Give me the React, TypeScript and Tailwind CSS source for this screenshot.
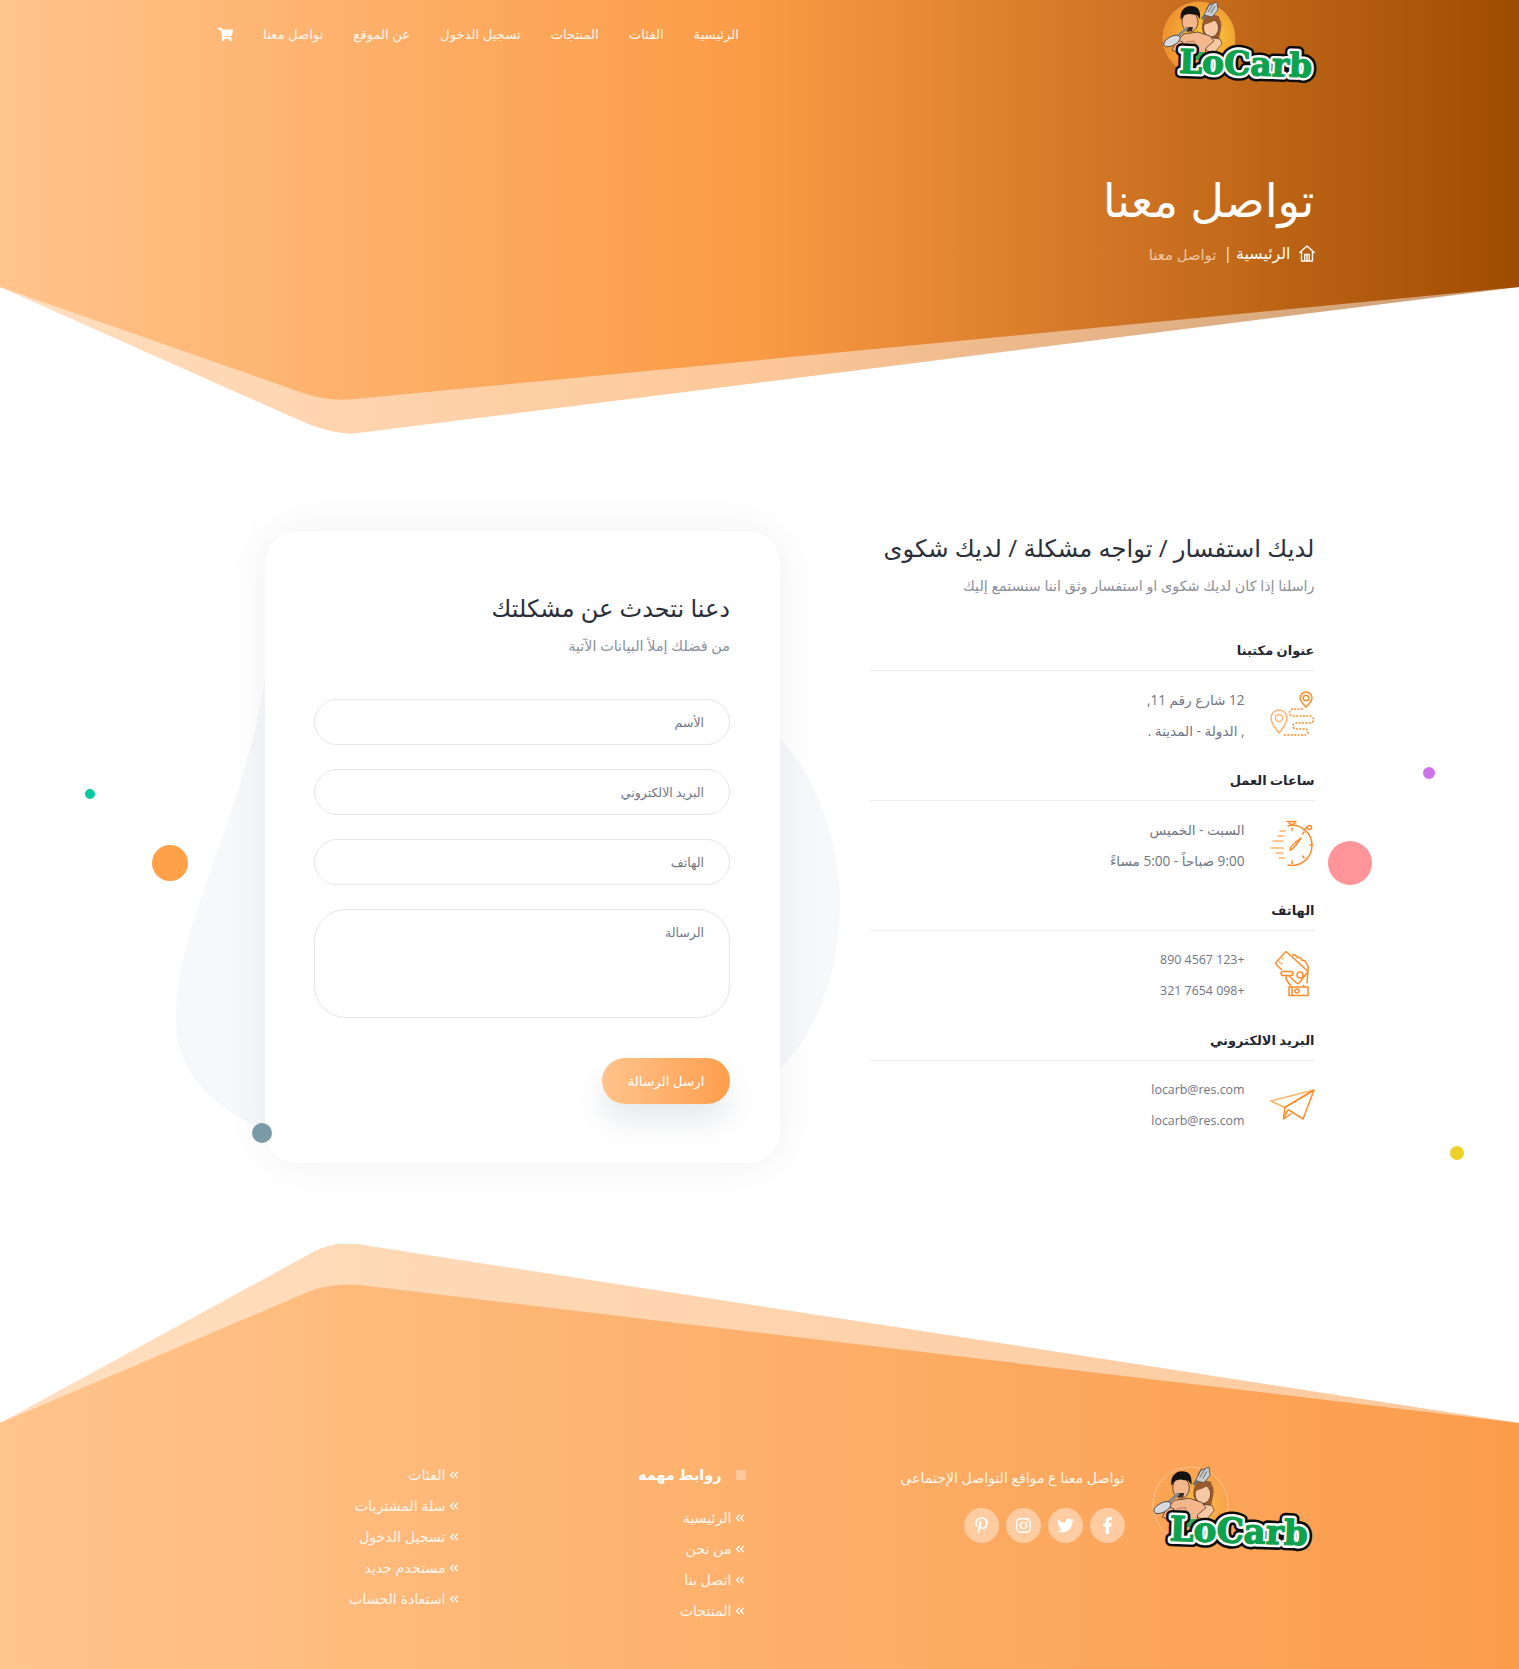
import { ChevronsLeft } from 'lucide-react';
import { FaShoppingCart, FaFacebookF, FaTwitter, FaInstagram, FaPinterestP } from 'react-icons/fa';

const navLinks = ['الرئيسية', 'الفئات', 'المنتجات', 'تسجيل الدخول', 'عن الموقع', 'تواصل معنا'];
const importantLinks = ['الرئيسية', 'من نحن', 'اتصل بنا', 'المنتجات'];
const otherLinks = ['الفئات', 'سلة المشتريات', 'تسجيل الدخول', 'مستخدم جديد', 'استعادة الحساب'];

function Logo({ flat = false }: { flat?: boolean }) {
  return (
    <svg width={flat ? 166 : 160} height={flat ? 93.500 : 90} viewBox="14 0 160 90" className="block" direction="ltr">
      <defs>
        <radialGradient id={flat ? 'sunFlat' : 'sun'} cx="0.6" cy="0.5" r="0.6">
          <stop offset="0" stopColor="#f9d13c" stopOpacity={flat ? 0.75 : 1} />
          <stop offset="1" stopColor="#ef8f2e" stopOpacity={flat ? 0 : 1} />
        </radialGradient>
      </defs>
      <circle cx="51" cy="38" r="36" fill={`url(#${flat ? 'sunFlat' : 'sun'})`} stroke={flat ? '#ffffff' : '#f3b46a'} strokeWidth="0.5" strokeDasharray={flat ? '2 1' : undefined} />
      {/* woman */}
      <path d="M54 30c-1-10 4-15 10-15s11 5 9 14l-2 10H58z" fill="#9a5a2c" />
      <ellipse cx="63" cy="28" rx="7.5" ry="9" fill="#f6c9a4" stroke="#3b2415" strokeWidth="0.6" />
      <path d="M56 25c3-1 9-3 13-6l3 6-1-9-10-2-5 5z" fill="#9a5a2c" />
      <path d="M58 37l14 2 2 5-8 9-9-3z" fill="#f6c9a4" stroke="#3b2415" strokeWidth="0.6" />
      {/* fork */}
      <path d="M54 19l8-9" stroke="#6b6f72" strokeWidth="3" />
      <path d="M56 15l5-10 8-3 1 8-6 7z" fill="#c9cdd0" stroke="#3d3f42" strokeWidth="0.7" />
      <path d="M60 12l5-8M63 13l4-7M58 10l4-7" stroke="#3d3f42" strokeWidth="0.7" />
      {/* man */}
      <path d="M28 42l8-8 14-2 12 4 4 5-8 7-1 8H33z" fill="#f4b78d" stroke="#3b2415" strokeWidth="0.7" />
      <path d="M24 50l5-10 6 2-2 12z" fill="#f4b78d" stroke="#3b2415" strokeWidth="0.7" />
      <path d="M46 41l3 8M38 42l8-1" stroke="#a8683f" strokeWidth="0.7" fill="none" />
      <ellipse cx="42" cy="22" rx="8" ry="10" fill="#f4b78d" stroke="#3b2415" strokeWidth="0.7" />
      <path d="M33 20c-2-8 3-14 10-14 6 0 10 3 9 13l-3-4-8-1-5 1z" fill="#141210" />
      <path d="M38 27h7l-1 4h-5z" fill="#3b2a20" />
      {/* spoon */}
      <path d="M30 36l9-8" stroke="#84888b" strokeWidth="3" strokeLinecap="round" />
      <ellipse cx="24" cy="41" rx="9" ry="4.500" transform="rotate(-28 24 41)" fill="#d6dadc" stroke="#3d3f42" strokeWidth="0.8" />
      <path d="M44 52h14l-3 8H47z" fill="#38a84f" />
      {/* wordmark */}
      <g fontFamily="'DejaVu Serif', serif" fontWeight="700" fontSize="33" transform="rotate(2 98 64)">
        <text x="31" y="75" fill="#0b0b0b" stroke="#0b0b0b" strokeWidth="11" strokeLinejoin="round">LoCarb</text>
        <text x="31" y="75" fill="#ffffff" stroke="#ffffff" strokeWidth="6" strokeLinejoin="round">LoCarb</text>
        <text x="31" y="75" fill="#0ea24e" stroke="#0ea24e" strokeWidth="1.200" strokeLinejoin="round">LoCarb</text>
      </g>
    </svg>
  );
}

function HomeIcon() {
  return (
    <svg width="16" height="17" viewBox="0 0 16 17" fill="none" stroke="#ffffff" strokeWidth="1.4" strokeLinejoin="round">
      <path d="M0.8 7.5 8 1l7.2 6.5" strokeLinecap="round" />
      <path d="M2.5 6.5V16h11V6.5" />
      <path d="M5.7 16V9.5h4.6V16" />
      <path d="M8 9.5V16" />
    </svg>
  );
}

function RouteIcon() {
  return (
    <svg width="45" height="48" viewBox="0 0 45 48" fill="none" strokeWidth="1.5">
      <path d="M36 17c-4-4-6-6-6-9a6 6 0 0 1 12 0c0 3-2 5-6 9z" stroke="#fb8c2a" />
      <circle cx="36" cy="8" r="2.8" stroke="#fb8c2a" />
      <path d="M9 43C4 37 1 33 1 28a8 8 0 0 1 16 0c0 5-3 9-8 15z" stroke="#ffb26b" />
      <circle cx="9" cy="28" r="3.6" stroke="#ffb26b" />
      <path d="M33 19H23a3.5 3.5 0 0 0 0 7h17a3.5 3.5 0 0 1 0 7H26a3 3 0 0 0 0 6h9a2.5 2.5 0 0 1 0 6H13" stroke="#fb8c2a" strokeDasharray="2 1.4" />
    </svg>
  );
}

function WatchIcon() {
  return (
    <svg width="45" height="48" viewBox="0 0 45 48" fill="none" stroke="#fb8c2a" strokeWidth="1.5" strokeLinecap="round">
      <path d="M18 5.8A20 20 0 1 1 18 45" />
      <path d="M17 1.5h9M19 1.5c0 2 1 3 3 3s3-1 3-3" />
      <path d="M34 10l3-3" />
      <circle cx="39.5" cy="7.5" r="2" />
      <path d="M20 29.5c0-2.5 6-8 11-11.5-3 5-8.500 11-10 12-1 .4-1-.2-1-.5z" />
      <path d="M40 25h2.500M22 8v2.500M22 41v2.500M34 12l-1.500 2M34 38l-1.500-2" />
      <path d="M10 11h5M8 16h6M3 21h10M1 28h12M6 33h7M9 38h5" stroke="#ffb26b" />
    </svg>
  );
}

function PhoneIcon() {
  return (
    <svg width="45" height="48" viewBox="0 0 45 48" fill="none" stroke="#fb8c2a" strokeWidth="1.5" strokeLinejoin="round">
      <path d="M15 2.500 6 12.500a1.500 1.500 0 0 0 .2 2L12 20" />
      <path d="M15 2.500a1.500 1.500 0 0 1 2-.3l20 18.300a1.500 1.500 0 0 1 .2 2L29 33a1.500 1.500 0 0 1-2 .2l-8-7.200" />
      <path d="M9 11.500l3.500 3M10.500 7l3 2.500" stroke="#ffb26b" />
      <path d="M22 5.500c1.500-1 3-1 4 .2l1.500 2c1.500-.7 3-.3 3.500 1l1 1.800c2-.5 3.500 .5 4 2l1 2c1.500 1.500 1.500 3 1 5l-1 14" />
      <rect x="11" y="21.500" width="12" height="4" rx="2" />
      <circle cx="30" cy="25" r="3" />
      <path d="M16 26v3l5 7.500M33 35l2 2" />
      <rect x="19" y="37" width="19" height="8.500" />
      <circle cx="27" cy="41" r="2" />
      <path d="M22 37v8.500" />
    </svg>
  );
}

function PlaneIcon() {
  return (
    <svg width="45" height="48" viewBox="0 0 45 48" fill="none" stroke="#fb8c2a" strokeWidth="1.5" strokeLinejoin="round">
      <path d="M44 10 0.8 21l14 6.500z" stroke="#ffb26b" />
      <path d="M44 10 14.800 27.500 13.500 39l8-5.500" />
      <path d="M44 10 33 39 18 29.500" />
      <path d="M13.500 39 18 29.500" />
    </svg>
  );
}

function InfoBlock({ title, lines, icon, latin = false }: { title: string; lines: string[]; icon: React.ReactNode; latin?: boolean }) {
  return (
    <div className="h-[130px]">
      <h4 className="h-[32px] border-b border-[#ececec] text-[13px] leading-[23px] font-bold text-[#23262f]">{title}</h4>
      <div className="flex items-start gap-[25px] pt-[11px]">
        <div className="shrink-0 mt-[8px]">{icon}</div>
        <div className="pt-[2px]">
          {lines.map((l) => (
            <p key={l} className={`leading-[31px] text-[#6f7583] ${latin ? 'text-[12.4px]' : 'text-[13.6px]'}`}>{l}</p>
          ))}
        </div>
      </div>
    </div>
  );
}

function Field({ placeholder }: { placeholder: string }) {
  return (
    <input
      placeholder={placeholder}
      className="block h-[46px] w-full rounded-full border border-[#e4e5e9] bg-white pr-[25px] pl-[24px] text-[12.5px] outline-none placeholder:text-[#6f7583]"
    />
  );
}

function LinkList({ links, gap }: { links: string[]; gap: string }) {
  return (
    <ul className={gap}>
      {links.map((l) => (
        <li key={l} className="flex h-[31px] items-center text-[14.2px] text-[#fff6ec]">
          <ChevronsLeft size={14} strokeWidth={2.2} className="-mr-[1px] ml-[1px] shrink-0 text-white" />
          <span>{l}</span>
        </li>
      ))}
    </ul>
  );
}

export default function App() {
  return (
    <div dir="rtl" className="relative w-full overflow-hidden bg-white font-['Open_Sans','DejaVu_Sans',sans-serif]">
      {/* Hero */}
      <header className="relative h-[440px]">
        <svg className="absolute inset-0" width="1519" height="440" viewBox="0 0 1519 440">
          <defs>
            <linearGradient id="hero" gradientUnits="userSpaceOnUse" x1="0" y1="0" x2="1519" y2="0">
              <stop offset="0" stopColor="#ffc48b" />
              <stop offset="0.5" stopColor="#fb9a45" />
              <stop offset="1" stopColor="#9f4b00" />
            </linearGradient>
          </defs>
          <path d="M0 287 300 420.6Q335 436 358 433L1519 287Z" fill="url(#hero)" opacity="0.55" />
          <path d="M0 0H1519V287L355 399Q330 402 303 393L0 287Z" fill="url(#hero)" />
        </svg>
        <div className="relative mx-auto w-[1110px]">
          <div className="flex items-start">
            <div className="-mr-[7.5px] shrink-0">
              <Logo />
            </div>
            <nav className="mr-[423px] flex items-center gap-[30px] pt-[23px]">
              {navLinks.map((l) => (
                <a key={l} className="text-[13.2px] leading-[22px] text-[#fff6ec]">{l}</a>
              ))}
              <FaShoppingCart size={15} className="text-white" />
            </nav>
          </div>
          <h1 className="mt-[79px] text-[46.4px] leading-[60px] font-normal text-white">تواصل معنا</h1>
          <div className="mt-[13px] flex items-center gap-[4px] text-[15.8px] text-white">
            <HomeIcon />
            <span className="mr-[4px]">الرئيسية</span>
            <span>|</span>
            <span className="mr-[3px] text-[14.8px] text-[#f2c6a2]">تواصل معنا</span>
          </div>
        </div>
      </header>

      {/* Contact */}
      <main className="relative pt-[91px] pb-[81px]">
        <svg className="absolute left-[170px] top-[200px]" width="680" height="540" viewBox="170 640 680 540">
          <path d="M265 680C240 830 172 930 176 1025C178 1075 215 1110 265 1130L780 1068C820 1030 840 965 840 905C840 840 815 775 780 739L500 640Z" fill="#f7f8fa" />
        </svg>
        <span className="absolute left-[85px] top-[349px] h-[10px] w-[10px] rounded-full bg-[#03c8a0]" />
        <span className="absolute left-[152px] top-[405px] h-[36px] w-[36px] rounded-full bg-[#ffa149]" />
        <span className="absolute left-[252px] top-[683px] z-10 h-[20px] w-[20px] rounded-full bg-[#7a9aa7]" />
        <span className="absolute left-[1423px] top-[327px] h-[12px] w-[12px] rounded-full bg-[#cf73ea]" />
        <span className="absolute left-[1328px] top-[401px] h-[44px] w-[44px] rounded-full bg-[#ff949b]" />
        <span className="absolute left-[1450px] top-[706px] h-[14px] w-[14px] rounded-full bg-[#ecd228]" />

        <div className="relative mx-auto flex w-[1110px] items-start">
          <section className="w-[445px] shrink-0">
            <h2 className="-mt-[1px] h-[36px] text-[24.2px] leading-[36px] font-normal text-[#2b2f3a]">لديك استفسار / تواجه مشكلة / لديك شكوى</h2>
            <p className="mt-[9px] text-[14.3px] leading-[22px] text-[#8a8f9c]">راسلنا إذا كان لديك شكوى او استفسار وثق اننا سنستمع إليك</p>
            <div className="mt-[42px]">
              <InfoBlock title="عنوان مكتبنا" icon={<RouteIcon />} lines={['12 شارع رقم 11,', ', الدولة - المدينة .']} />
              <InfoBlock title="ساعات العمل" icon={<WatchIcon />} lines={['السبت - الخميس', '9:00 صباحاً - 5:00 مساءً']} />
              <InfoBlock title="الهاتف" icon={<PhoneIcon />} latin lines={['+123 4567 890', '+098 7654 321']} />
              <InfoBlock title="البريد الالكتروني" icon={<PlaneIcon />} latin lines={['locarb@res.com', 'locarb@res.com ']} />
            </div>
          </section>

          <section className="relative mr-[89.5px] h-[632px] w-[515px] shrink-0 rounded-[32px] bg-white pr-[50px] pl-[49px] pt-[59px] shadow-[0_0_40px_rgba(60,70,100,0.08)]">
            <h3 className="text-[24px] leading-[36px] font-normal text-[#2b2f3a]">دعنا نتحدث عن مشكلتك</h3>
            <p className="mt-[9px] text-[14.4px] leading-[22px] text-[#8a8f9c]">من فضلك إملأ البيانات الآتية</p>
            <form className="mt-[42px] flex flex-col gap-[24px]">
              <Field placeholder="الأسم" />
              <Field placeholder="البريد الالكتروني" />
              <Field placeholder="الهاتف" />
              <textarea
                placeholder="الرسالة"
                className="block h-[109px] w-full resize-none rounded-[32px] border border-[#e4e5e9] bg-white pr-[25px] pl-[24px] py-[14px] text-[12.5px] outline-none placeholder:text-[#6f7583]"
              />
              <div className="mt-[16px] flex">
                <button type="button" className="h-[46px] w-[128px] rounded-full bg-gradient-to-l from-[#fd9e4b] to-[#ffc38b] text-[13.4px] text-white shadow-[0_18px_30px_rgba(60,70,100,0.12)]">
                  ارسل الرسالة
                </button>
              </div>
            </form>
          </section>
        </div>
      </main>

      {/* Footer */}
      <footer className="relative h-[425px]">
        <svg className="absolute inset-0" width="1519" height="425" viewBox="0 0 1519 425">
          <defs>
            <linearGradient id="foot" gradientUnits="userSpaceOnUse" x1="0" y1="0" x2="1519" y2="0">
              <stop offset="0" stopColor="#ffc48b" />
              <stop offset="1" stopColor="#fb9c4b" />
            </linearGradient>
          </defs>
          <path d="M0 179 306 12Q335 -6 365 1.300L1519 179Z" fill="url(#foot)" opacity="0.55" />
          <path d="M0 179 308 48Q333 38 362 41.300L1519 179V425H0Z" fill="url(#foot)" />
        </svg>
        <div className="relative mx-auto flex w-[1110px] items-start pt-[219px]">
          <div className="mt-[2px] -mr-[3px] w-[193px] shrink-0">
            <Logo flat />
          </div>
          <div className="w-[379px] shrink-0 pt-[4px]">
            <p className="text-[14.1px] leading-[22px] text-[#fff6ec]">تواصل معنا ع مواقع التواصل الإجتماعى</p>
            <div className="mt-[19px] flex gap-[7px]">
              {[FaFacebookF, FaTwitter, FaInstagram, FaPinterestP].map((Icon, i) => (
                <span key={i} className="flex h-[35px] w-[35px] items-center justify-center rounded-full bg-[#ffcba0] text-white">
                  <Icon size={17} />
                </span>
              ))}
            </div>
          </div>
          <div className="w-[286px] shrink-0">
            <div className="flex h-[24px] items-center gap-[14px] text-[14.4px] font-bold text-white">
              <span className="h-[10px] w-[10px] bg-[#ffc79a]" />
              <span>روابط مهمه</span>
            </div>
            <LinkList links={importantLinks} gap="mt-[15px]" />
          </div>
          <LinkList links={otherLinks} gap="-mt-[4px]" />
        </div>
      </footer>
    </div>
  );
}
